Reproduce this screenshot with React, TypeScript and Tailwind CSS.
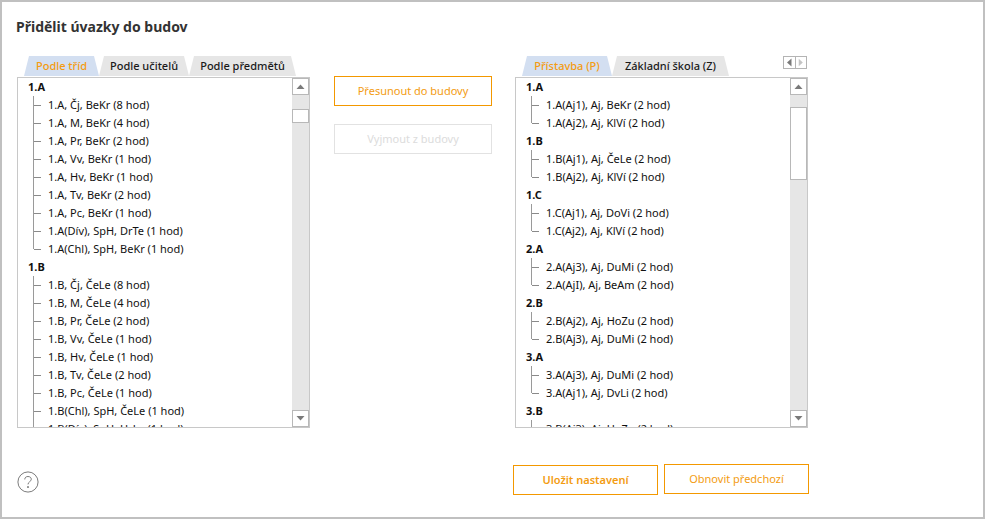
const font = 'font-["Noto_Sans","Open_Sans",sans-serif]';

const leftTree = [
  {
    head: '1.A',
    items: [
      '1.A, Čj, BeKr (8 hod)',
      '1.A, M, BeKr (4 hod)',
      '1.A, Pr, BeKr (2 hod)',
      '1.A, Vv, BeKr (1 hod)',
      '1.A, Hv, BeKr (1 hod)',
      '1.A, Tv, BeKr (2 hod)',
      '1.A, Pc, BeKr (1 hod)',
      '1.A(Dív), SpH, DrTe (1 hod)',
      '1.A(Chl), SpH, BeKr (1 hod)',
    ],
  },
  {
    head: '1.B',
    items: [
      '1.B, Čj, ČeLe (8 hod)',
      '1.B, M, ČeLe (4 hod)',
      '1.B, Pr, ČeLe (2 hod)',
      '1.B, Vv, ČeLe (1 hod)',
      '1.B, Hv, ČeLe (1 hod)',
      '1.B, Tv, ČeLe (2 hod)',
      '1.B, Pc, ČeLe (1 hod)',
      '1.B(Chl), SpH, ČeLe (1 hod)',
      '1.B(Dív), SpH, HrLe (1 hod)',
    ],
  },
];

const rightTree = [
  { head: '1.A', items: ['1.A(Aj1), Aj, BeKr (2 hod)', '1.A(Aj2), Aj, KlVí (2 hod)'] },
  { head: '1.B', items: ['1.B(Aj1), Aj, ČeLe (2 hod)', '1.B(Aj2), Aj, KlVí (2 hod)'] },
  { head: '1.C', items: ['1.C(Aj1), Aj, DoVi (2 hod)', '1.C(Aj2), Aj, KlVí (2 hod)'] },
  { head: '2.A', items: ['2.A(Aj3), Aj, DuMi (2 hod)', '2.A(AjI), Aj, BeAm (2 hod)'] },
  { head: '2.B', items: ['2.B(Aj2), Aj, HoZu (2 hod)', '2.B(Aj3), Aj, DuMi (2 hod)'] },
  { head: '3.A', items: ['3.A(Aj3), Aj, DuMi (2 hod)', '3.A(Aj1), Aj, DvLi (2 hod)'] },
  { head: '3.B', items: ['3.B(Aj3), Aj, HoZu (2 hod)'] },
];

function Tabs({ tabs }: { tabs: { label: string; w: string }[] }) {
  return (
    <div className="flex h-[21px] pl-[7px] items-start">
      {tabs.map((t, i) => (
        <div
          key={t.label}
          className={`${t.w} h-[20px] flex items-center justify-center text-[11px] font-medium [clip-path:polygon(5px_0,calc(100%-5px)_0,100%_100%,0_100%)] ${
            i === 0 ? 'bg-[#d3dff1] text-[#f39c12]' : 'bg-[#e6e6e6] text-[#1a1a1a]'
          }`}
        >
          {t.label}
        </div>
      ))}
    </div>
  );
}

function Arrow({ up }: { up?: boolean }) {
  return (
    <div className="h-[17px] w-[17px] border border-[#b8b8b8] bg-white flex items-center justify-center shrink-0">
      <svg width="9" height="5" viewBox="0 0 9 5">
        <path d={up ? 'M0.5 5 L4.5 0.5 L8.5 5 Z' : 'M0.5 0 L4.5 4.5 L8.5 0 Z'} fill="#7a7a7a" />
      </svg>
    </div>
  );
}

function TreeBox({
  tree,
  thumbClass,
}: {
  tree: { head: string; items: string[] }[];
  thumbClass: string;
}) {
  return (
    <div className="h-[351px] w-[293px] border border-[#c8c8c8] flex overflow-hidden bg-white">
      <div className="flex-1 overflow-hidden text-[11px] text-[#111]">
        {tree.map((g, gi) => (
          <div key={g.head}>
            <div className="h-[18px] pl-[10px] flex items-center font-bold">{g.head}</div>
            <div className="ml-[15px]">
              {g.items.map((it, i) => (
                <div key={it} className="h-[18px] flex items-center whitespace-nowrap">
                  <span
                    className={
                      i === g.items.length - 1 && gi < tree.length - 1
                        ? 'w-px h-[9px] self-start bg-[#9a9a9a]'
                        : 'w-px self-stretch bg-[#9a9a9a]'
                    }
                  />
                  <span className="w-[7px] h-px bg-[#8a8a8a] mr-[7px]" />
                  {it}
                </div>
              ))}
            </div>
          </div>
        ))}
      </div>
      <div className="w-[17px] bg-[#e6e6e6] flex flex-col justify-between relative">
        <Arrow up />
        <div className={`absolute left-0 w-[17px] bg-white border border-[#b8b8b8] ${thumbClass}`} />
        <Arrow />
      </div>
    </div>
  );
}

function OrangeButton({ label, bold, className }: { label: string; bold?: boolean; className: string }) {
  return (
    <button
      className={`h-[30px] border border-[#f39800] text-[#f39c12] text-[11px] ${bold ? 'font-semibold' : ''} ${className}`}
    >
      {label}
    </button>
  );
}

export default function App() {
  return (
    <div className={`${font} w-[985px] h-[519px] bg-white border-2 border-[#c0c0c0] overflow-hidden flex flex-col`}>
      <h1 className="text-[14px] font-bold text-[#333] mt-[14px] ml-[14px] h-[22px] leading-[22px]">Přidělit úvazky do budov</h1>

      <div className="flex mt-[18px] ml-[15px]">
        <div className="w-[293px]">
          <Tabs
            tabs={[
              { label: 'Podle tříd', w: 'w-[75px]' },
              { label: 'Podle učitelů', w: 'w-[90px]' },
              { label: 'Podle předmětů', w: 'w-[107px]' },
            ]}
          />
          <TreeBox tree={leftTree} thumbClass="top-[31px] h-[14px]" />
        </div>

        <div className="w-[158px] ml-[24px] flex flex-col gap-[18px] pt-[20px]">
          <OrangeButton label="Přesunout do budovy" className="w-[158px]" />
          <button className="h-[30px] w-[158px] border border-[#e2e2e2] text-[#dcdcdc] text-[11px]">Vyjmout z budovy</button>
        </div>

        <div className="w-[293px] ml-[23px] relative">
          <Tabs
            tabs={[
              { label: 'Přístavba (P)', w: 'w-[90px]' },
              { label: 'Základní škola (Z)', w: 'w-[117px]' },
            ]}
          />
          <div className="absolute right-[1px] top-0 flex h-[13px] border border-[#b4b4b4] bg-white">
            <svg width="11" height="11" viewBox="0 0 11 11">
              <path d="M7.5 1.5 L3 5.5 L7.5 9.5 Z" fill="#7a7a7a" />
            </svg>
            <svg width="11" height="11" viewBox="0 0 11 11" className="border-l border-[#b4b4b4]">
              <path d="M3 1.5 L7.5 5.5 L3 9.5 Z" fill="#c4c4c4" />
            </svg>
          </div>
          <TreeBox tree={rightTree} thumbClass="top-[29px] h-[73px]" />
        </div>
      </div>

      <div className="flex items-start mt-[36px] ml-[15px]">
        <svg width="22" height="22" viewBox="0 0 24 24" className="mt-[7px]" fill="none" stroke="#6f6f6f">
          <circle cx="12" cy="12" r="11" />
          <path d="M8.5 9.2 C8.5 7 10 6 12 6 C14.2 6 15.6 7.3 15.6 9 C15.6 11.5 12 11.8 12 14.6" />
          <circle cx="12" cy="17.5" r="0.6" fill="#6f6f6f" />
        </svg>
        <OrangeButton label="Uložit nastavení" bold className="w-[145px] ml-[474px] mt-px" />
        <OrangeButton label="Obnovit předchozí" className="w-[145px] ml-[6px]" />
      </div>
    </div>
  );
}
